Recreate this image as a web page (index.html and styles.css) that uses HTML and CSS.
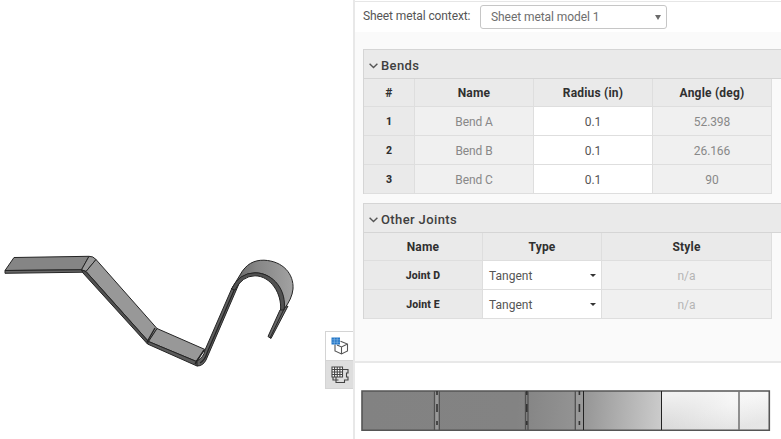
FILE: index.html
```html
<!DOCTYPE html>
<html lang="en">
<head>
<meta charset="utf-8">
<title>Sheet metal table</title>
<link rel="stylesheet" href="styles.css">
</head>
<body>
<div class="app">
  <main class="viewport">
    <svg class="model" viewBox="0 0 325 439" width="325" height="439" stroke="#242424" stroke-width="1" stroke-linejoin="round">
      <defs>
        <linearGradient id="hook" x1="0" x2="1"><stop offset="0" stop-color="#606060"/><stop offset=".4" stop-color="#858585"/><stop offset="1" stop-color="#a2a2a2"/></linearGradient>
      </defs>
      <path fill="#858585" d="M14 257.500 89 256.300 81.500 269.800 5 270.500Z"/>
      <path fill="#666" d="M5 270.500 81 269.800 84 272.200 5 273.300Z"/>
      <path fill="#999" d="M89 256.300Q93 256 96 259.500L86 271.500 81.500 269.800Z"/>
      <path fill="#989898" d="M96 259.500 157 328.500 148.500 341.500 86 271.500Z"/>
      <path fill="#505050" d="M81.500 269.800 86 271.500 148.500 341.500 147.500 344 83 273Z"/>
      <path fill="#989898" d="M157 328.500 205 349.500 196 361.300 148.500 341.500Z"/>
      <path fill="#5b5b5b" d="M148.500 341.500 196 361.300 200 360 202 363 197 366 147.500 344Z"/>
      <path fill="none" stroke-width="1.400" d="M155 328 147 342M204 350 195 364"/>
      <path fill="#606060" d="M232 288 205 350Q204 357 197 361L197 366Q203 366 206 360L241 279Z"/>
      <path fill="none" stroke-width="1.300" d="M235.500 287 207 353Q205 360 200 363"/>
      <path fill="#666" d="M280 310 268 336.500 271 338.500 288 306Z"/>
      <path fill="url(#hook)" d="M231.500 289 240 275C246 264 254 260 264 260.200C283 261 294 274 293 289Q292 299 284 309C285 291 274 273 255 272.800Q240 273 231.500 289Z"/>
      <path fill="#515151" d="M231.500 289Q239 273 255 272.800C274 273 287 291 284 310L280.500 310C282 294 271 276 255 275.800Q242 276 235 290Z"/>
      <path fill="none" d="M284 309 270 338"/>
    </svg>
    <nav class="tabs">
      <div class="tab">
        <svg width="18" height="18" viewBox="0 0 18 18" fill="none" stroke="#555" stroke-width="1.100"><path d="M9.500 4.200 16.500 7v7L10.500 17 4 14V7.500M16.500 7l-6 3L6 8M10.500 10v7"/><path fill="#2376c7" stroke="none" d="M.5.5h8.500v7H.5z"/><path stroke="#9cc6ec" stroke-width=".5" d="M3.300.5v7M6.200.5v7M.5 2.800h8.500M.5 5.200h8.500"/></svg>
      </div>
      <div class="tab tab-active">
        <svg width="18" height="18" viewBox="0 0 18 18" fill="none" stroke="#444" stroke-width="1.100"><path d="M12 3.500h5V7h-1.500v4H17v3h-3.500v2.500H5V14H2v-3M5 11v3h2.500"/><path fill="#fff" d="M1 1h10.500v10H1z"/><path d="M3.600 1v10M6.250 1v10M8.900 1v10M1 3.500h10.500M1 6h10.500M1 8.500h10.500"/></svg>
      </div>
    </nav>
  </main>
  <aside class="side">
    <section class="panel">
      <div class="context">
        <span class="context-label">Sheet metal context:</span>
        <div class="select"><span>Sheet metal model 1</span><i class="arrow"></i></div>
      </div>
      <div class="group bends">
        <h2><svg class="chevron" width="9" height="6" viewBox="0 0 9 6"><path d="M.6.800 4.500 4.600 8.400.800"/></svg><span>Bends</span></h2>
        <div class="grid">
          <b>#</b><b>Name</b><b>Radius (in)</b><b>Angle (deg)</b>
          <strong>1</strong><span class="locked">Bend A</span><span>0.1</span><span class="locked">52.398</span>
          <strong>2</strong><span class="locked">Bend B</span><span>0.1</span><span class="locked">26.166</span>
          <strong>3</strong><span class="locked">Bend C</span><span>0.1</span><span class="locked">90</span>
        </div>
      </div>
      <div class="group joints">
        <h2><svg class="chevron" width="9" height="6" viewBox="0 0 9 6"><path d="M.6.800 4.500 4.600 8.400.800"/></svg><span>Other Joints</span></h2>
        <div class="grid">
          <b>Name</b><b>Type</b><b>Style</b>
          <strong>Joint D</strong><span class="choice">Tangent<i class="arrow small"></i></span><span class="locked na">n/a</span>
          <strong>Joint E</strong><span class="choice">Tangent<i class="arrow small"></i></span><span class="locked na">n/a</span>
        </div>
      </div>
    </section>
    <section class="flat">
      <svg width="426" height="76" viewBox="355 363 426 76">
        <defs>
          <linearGradient id="sheet" gradientUnits="userSpaceOnUse" x1="362" y1="400" x2="770" y2="420"><stop offset="0" stop-color="#828282"/><stop offset=".38" stop-color="#838383"/><stop offset=".54" stop-color="#959595"/><stop offset=".74" stop-color="#cdcdcd"/><stop offset=".9" stop-color="#f0f0f0"/><stop offset="1" stop-color="#f5f5f5"/></linearGradient>
          <linearGradient id="shine" gradientUnits="userSpaceOnUse" x1="700" y1="385" x2="715" y2="435"><stop offset="0" stop-color="#fff" stop-opacity=".7"/><stop offset=".5" stop-color="#fff" stop-opacity=".3"/><stop offset="1" stop-color="#ccc" stop-opacity=".35"/></linearGradient>
        </defs>
        <path fill="url(#sheet)" d="M362 391h407.500v39H362z"/>
        <path fill="url(#shine)" d="M662 391h107.500v39H662z"/>
        <path fill="#999" d="M435 391h4v39h-4zM576 391h7v39h-7z"/>
        <path fill="none" stroke="#555" stroke-width="1.600" d="M362 391h407.300v39.200H362z"/>
        <path stroke="#505050" stroke-width="1.300" d="M434.500 391v39M439.300 391v39M525.500 391v39M528 391v39M575.300 391v39"/>
        <path stroke="#222" d="M583.500 391v39M661.500 391v39"/>
        <path stroke="#777" stroke-width="1.600" d="M739 391v39"/>
        <path stroke="#333" stroke-width="1.600" d="M437 391v4M437 404v8M437 421v4M526.800 391v4M526.800 404v8M526.800 421v4M579.400 391v4M579.400 404v8M579.400 421v4"/>
      </svg>
    </section>
  </aside>
</div>
</body>
</html>
```

FILE: styles.css
```css
* { box-sizing: border-box; }
body { margin: 0; font: 12px/16px Roboto, "Liberation Sans", sans-serif; color: #555; background: #fff; }
.app { display: flex; width: 781px; height: 439px; overflow: hidden; }
.viewport { display: flex; width: 353px; align-items: flex-start; }
.model { flex: none; }
.tabs { width: 28px; margin: 331px 0 0; flex: none; border: 1px solid #d4d4d4; border-right: 0; }
.tab { display: flex; height: 28px; align-items: center; justify-content: center; }
.tab-active { background: #dedede; border-top: 1px solid #d4d4d4; }
.side { width: 428px; border-left: 2px solid #e8e8e8; }
.panel { height: 362px; margin-top: 1px; border-top: 1px solid #e6e6e6; border-bottom: 2px solid #e8e8e8; background: #fafafa; overflow: hidden; }
.context { display: flex; height: 30px; padding: 3px 0 0 8px; background: #fff; }
.context-label { width: 117px; padding-top: 3px; letter-spacing: -.1px; white-space: nowrap; }
.select { display: flex; width: 187px; height: 24px; align-items: center; justify-content: space-between; padding: 0 5px 0 10px; border: 1px solid #c6c6c6; border-radius: 3px; color: #6e6e6e; letter-spacing: -.07px; }
.arrow { width: 0; height: 0; border: 3.5px solid transparent; border-top: 5px solid #6b6b6b; border-bottom: 0; }
.arrow.small { border-width: 3px 3px 0; border-top-color: #333; }
.group { margin-left: 8px; border-left: 1px solid #d5d5d5; }
.bends { margin-top: 17px; }
.joints { margin-top: 9px; }
.group h2 { display: flex; align-items: center; gap: 3px; height: 30px; margin: 0; padding: 3px 0 0 5px; border: solid #d5d5d5; border-width: 1px 0; background: #eaeaea; color: #404040; font-size: 13px; font-weight: 500; letter-spacing: .38px; }
.chevron { fill: none; stroke: #555; stroke-width: 1.4; }
.grid { display: grid; width: 408px; }
.bends .grid { grid-template-columns: 51px 119px 119px 119px; grid-template-rows: 28px 29px 29px 29px; }
.joints .grid { grid-template-columns: 119px 119px 170px; grid-template-rows: 28px 29px 29px; }
.grid > * { display: flex; align-items: center; justify-content: center; padding-top: 2px; border: solid #dedede; border-width: 0 1px 1px 0; background: #fff; }
.grid > b { padding-top: 0; background: #eaeaea; color: #303030; font-weight: 700; letter-spacing: .2px; }
.grid > strong { background: #eaeaea; color: #303030; font-size: 10.5px; font-weight: 800; letter-spacing: .1px; }
.grid > .locked { background: #f0f0f0; color: #888; letter-spacing: -.1px; }
.grid > .na { color: #b5b5b5; letter-spacing: 0; }
.grid > .choice { justify-content: space-between; padding: 1px 5px 0 6px; }
.flat { height: 76px; }
.flat svg { display: block; }
```
